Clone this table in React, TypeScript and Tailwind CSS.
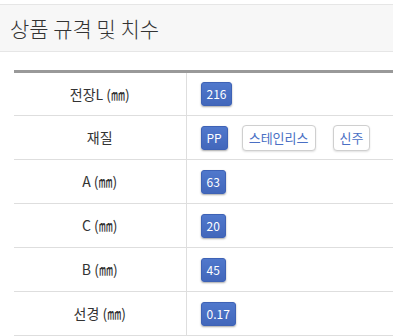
type Spec = {
  label: string;
  values: string[];
  extra?: string[];
};

const specs: Spec[] = [
  { label: "전장L (㎜)", values: ["216"] },
  { label: "재질", values: ["PP"], extra: ["스테인리스", "신주"] },
  { label: "A (㎜)", values: ["63"] },
  { label: "C (㎜)", values: ["20"] },
  { label: "B (㎜)", values: ["45"] },
  { label: "선경 (㎜)", values: ["0.17"] },
];

function ValueChip({ text }: { text: string }) {
  return (
    <span className="inline-flex h-[24px] items-center rounded-[3px] border border-[#3e62b5] bg-gradient-to-b from-[#5078cc] to-[#4267bb] px-[5px] text-[12px] text-white shadow-[0_1px_2px_rgba(0,0,0,0.35)]">
      {text}
    </span>
  );
}

function OptionChip({ text }: { text: string }) {
  return (
    <span className="inline-flex h-[26px] items-center rounded-[4px] border border-[#cfcfcf] bg-white px-[6px] text-[13px] text-[#4a6fc4] shadow-[0_1px_2px_rgba(0,0,0,0.12)]">
      {text}
    </span>
  );
}

export default function App() {
  return (
    <div
      className="h-[336px] w-[393px] overflow-hidden bg-white"
      style={{ fontFamily: '"Noto Sans CJK KR", "Noto Sans", sans-serif' }}
    >
      <div className="mt-[4px] flex h-[48px] items-center border-y border-[#e6e6e6] bg-[#f7f7f7] pl-[10px]">
        <h2 className="text-[21px] font-light leading-none text-[#333]">상품 규격 및 치수</h2>
      </div>

      <table className="mt-[18px] ml-[14px] w-[379px] border-collapse border-t-[3px] border-[#999]">
        <tbody>
          {specs.map((row) => (
            <tr key={row.label} className="h-[44px] border-b border-[#dedede]">
              <td className="w-[172px] border-r border-[#dedede] text-center text-[14px] text-[#333]">
                {row.label}
              </td>
              <td className="pl-[14px]">
                <div className="flex items-center">
                  {row.values.map((v) => (
                    <ValueChip key={v} text={v} />
                  ))}
                  {row.extra?.map((x, i) => (
                    <span key={x} className={i === 0 ? "ml-[14px]" : "ml-[17px]"}>
                      <OptionChip text={x} />
                    </span>
                  ))}
                </div>
              </td>
            </tr>
          ))}
        </tbody>
      </table>
    </div>
  );
}
